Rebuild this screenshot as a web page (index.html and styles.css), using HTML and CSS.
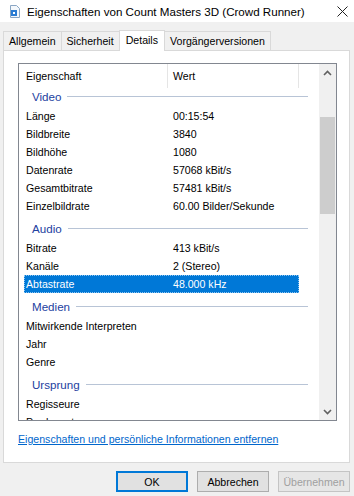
FILE: index.html
```html
<!DOCTYPE html>
<html lang="de">
<head>
    <meta charset="UTF-8">
    <title>Eigenschaften von Count Masters 3D (Crowd Runner)</title>
    <link rel="stylesheet" href="styles.css">
</head>
<body>

    <!-- Titelleiste -->
    <div class="titlebar">
        <svg class="file-icon" width="12" height="13" viewBox="0 0 12 13">
            <path d="M1.5 0.5h6l3 3v9h-9z" fill="#f4f8fc" stroke="#8aa6c4"/>
            <rect x="2" y="5" width="6" height="6" fill="#2b7cd3"/>
            <rect x="4" y="7" width="2" height="2" fill="#ffffff"/>
        </svg>
        <span class="title">Eigenschaften von Count Masters 3D (Crowd Runner)</span>
        <svg class="close" width="11" height="11" viewBox="0 0 11 11">
            <path d="M0.5 0.5l10 10M10.5 0.5l-10 10" stroke="#222" stroke-width="1"/>
        </svg>
    </div>

    <!-- Registerkarten -->
    <div class="tabs">
        <div class="tab">Allgemein</div>
        <div class="tab">Sicherheit</div>
        <div class="tab selected">Details</div>
        <div class="tab">Vorgängerversionen</div>
    </div>

    <div class="panel">
        <div class="listbox">
            <div class="list">
                <div class="header">
                    <div class="hcell first">Eigenschaft</div>
                    <div class="hcell second">Wert</div>
                </div>

                <div class="group top"><span>Video</span></div>
                <div class="row"><span class="name">Länge</span><span class="value">00:15:54</span></div>
                <div class="row"><span class="name">Bildbreite</span><span class="value">3840</span></div>
                <div class="row"><span class="name">Bildhöhe</span><span class="value">1080</span></div>
                <div class="row"><span class="name">Datenrate</span><span class="value">57068 kBit/s</span></div>
                <div class="row"><span class="name">Gesamtbitrate</span><span class="value">57481 kBit/s</span></div>
                <div class="row"><span class="name">Einzelbildrate</span><span class="value">60.00 Bilder/Sekunde</span></div>

                <div class="group"><span>Audio</span></div>
                <div class="row"><span class="name">Bitrate</span><span class="value">413 kBit/s</span></div>
                <div class="row"><span class="name">Kanäle</span><span class="value">2 (Stereo)</span></div>
                <div class="row active"><span class="name">Abtastrate</span><span class="value">48.000 kHz</span></div>

                <div class="group"><span>Medien</span></div>
                <div class="row"><span class="name">Mitwirkende Interpreten</span><span class="value"></span></div>
                <div class="row"><span class="name">Jahr</span><span class="value"></span></div>
                <div class="row"><span class="name">Genre</span><span class="value"></span></div>

                <div class="group"><span>Ursprung</span></div>
                <div class="row"><span class="name">Regisseure</span><span class="value"></span></div>
                <div class="row"><span class="name">Produzenten</span><span class="value"></span></div>
            </div>

            <!-- Bildlaufleiste -->
            <div class="scrollbar">
                <div class="arrow">
                    <svg width="9" height="6" viewBox="0 0 9 6"><path d="M1 5l3.5-3.5L8 5" fill="none" stroke="#606060" stroke-width="1.6"/></svg>
                </div>
                <div class="track-gap"></div>
                <div class="thumb"></div>
                <div class="track-rest"></div>
                <div class="arrow">
                    <svg width="9" height="6" viewBox="0 0 9 6"><path d="M1 1l3.5 3.5L8 1" fill="none" stroke="#606060" stroke-width="1.6"/></svg>
                </div>
            </div>
        </div>

        <a class="remove-link" href="#">Eigenschaften und persönliche Informationen entfernen</a>
    </div>

    <!-- Schaltflächen -->
    <div class="buttons">
        <button class="btn default">OK</button>
        <button class="btn">Abbrechen</button>
        <button class="btn" disabled>Übernehmen</button>
    </div>

</body>
</html>
```

FILE: styles.css
```css
/* Allgemein */
body {
    margin: 0;
    width: 354px;
    height: 496px;
    overflow: hidden;
    background: #f0f0f0;
    font-family: "Liberation Sans", Arial, sans-serif;
    font-size: 10.6px;
    color: #000;
}

/* Titelleiste */
.titlebar {
    height: 22px;
    background: #fff;
    display: flex;
    align-items: center;
    padding: 0 6px 0 9px;
}

.file-icon {
    margin-right: 6px;
    margin-top: 1px;
}

.title {
    flex: 1;
    font-size: 11.6px;
    color: #000;
    white-space: nowrap;
}

.close {
    margin-top: 1px;
}

/* Registerkarten */
.tabs {
    display: flex;
    align-items: flex-end;
    height: 20px;
    margin-top: 8px;
    padding-left: 3px;
    position: relative;
    z-index: 1;
}

.tab {
    height: 19px;
    line-height: 19px;
    padding: 0 5px;
    border: 1px solid #d9d9d9;
    border-bottom: none;
    border-right: none;
    background: #f0f0f0;
    box-sizing: border-box;
    white-space: nowrap;
}

.tab:last-child {
    border-right: 1px solid #d9d9d9;
}

.tab.selected {
    height: 21px;
    line-height: 19px;
    margin-bottom: -1px;
    padding: 0 6px;
    background: #fff;
    border-right: 1px solid #d9d9d9;
}

.tab.selected + .tab {
    border-left: none;
}

/* Inhalt der Karte */
.panel {
    margin: 0 4px 0 3px;
    height: 413px;
    box-sizing: border-box;
    background: #fff;
    border: 1px solid #d9d9d9;
    padding: 12px 0 0 14px;
}

.listbox {
    width: 319px;
    height: 358px;
    box-sizing: border-box;
    border: 1px solid #828790;
    display: flex;
}

.list {
    flex: 1;
    overflow: hidden;
}

.header {
    display: flex;
    height: 24px;
    line-height: 24px;
}

.hcell {
    box-sizing: border-box;
    border-right: 1px solid #e5e5e5;
}

.hcell.first {
    width: 149px;
    padding-left: 7px;
}

.hcell.second {
    width: 131px;
    padding-left: 5px;
}

/* Gruppen */
.group {
    display: flex;
    align-items: center;
    height: 24px;
    padding: 4px 11px 2px 13px;
    box-sizing: border-box;
    color: #2341a0;
    font-size: 11.6px;
}

.group.top {
    height: 19px;
    padding-top: 0;
    padding-bottom: 3px;
}

.group::after {
    content: "";
    flex: 1;
    height: 1px;
    margin-left: 6px;
    background: #b8c4d6;
}

/* Zeilen */
.row {
    display: flex;
    height: 18px;
    line-height: 18px;
    width: 275px;
    margin-left: 5px;
    box-sizing: border-box;
    white-space: nowrap;
}

.row .name {
    width: 149px;
    padding-left: 2px;
    box-sizing: border-box;
}

.row.active {
    background: #0078d7;
    color: #fff;
    outline: 1px dotted #8cc4f0;
    outline-offset: -1px;
}

/* Bildlaufleiste */
.scrollbar {
    width: 17px;
    background: #f0f0f0;
    display: flex;
    flex-direction: column;
}

.arrow {
    height: 17px;
    display: flex;
    align-items: center;
    justify-content: center;
}

.track-gap {
    height: 36px;
}

.thumb {
    height: 97px;
    margin: 0 1px;
    background: #cdcdcd;
}

.track-rest {
    flex: 1;
}

.remove-link {
    display: block;
    margin-top: 10px;
    line-height: 16px;
    color: #0066cc;
    text-decoration: underline;
}

/* Schaltflächen */
.buttons {
    display: flex;
    justify-content: flex-end;
    gap: 9px;
    margin-top: 8px;
    padding-right: 4px;
}

.btn {
    width: 72px;
    height: 21px;
    padding: 0;
    font-family: inherit;
    font-size: 10.6px;
    color: #000;
    background: #e1e1e1;
    border: 1px solid #adadad;
}

.btn.default {
    border: 2px solid #0078d7;
}

.btn:disabled {
    color: #a0a0a0;
    background: #e6e6e6;
    border-color: #c4c4c4;
}
```
